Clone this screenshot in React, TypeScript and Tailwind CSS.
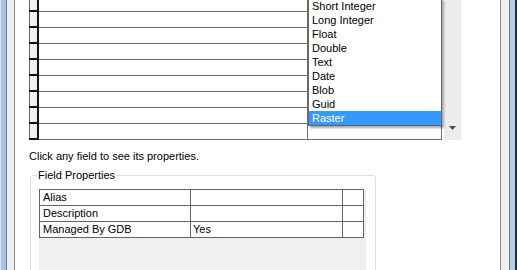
import React from "react";

const font = { fontFamily: '"Liberation Sans", Arial, sans-serif' };

const types = [
  "Short Integer",
  "Long Integer",
  "Float",
  "Double",
  "Text",
  "Date",
  "Blob",
  "Guid",
  "Raster",
];

function GridRow() {
  return (
    <div className="flex h-[16px] shrink-0">
      <div className="flex h-[16px] w-[10px] shrink-0 flex-col">
        <div className="flex h-[14px] shrink-0">
          <div className="w-[1px] bg-[#6a6a6a]" />
          <div className="w-[7px] bg-[#f0f0f0]" />
          <div className="w-[2px] bg-[#111]" />
        </div>
        <div className="h-[2px] shrink-0 bg-[#111]" />
      </div>
      <div className="h-[16px] w-[269px] shrink-0 border-b border-r border-[#6d6d6d]" />
      <div className="h-[16px] w-[134px] shrink-0 border-b border-r border-[#6d6d6d]" />
    </div>
  );
}

export default function App() {
  return (
    <div
      className="flex h-[270px] w-[517px] overflow-hidden bg-white text-[11px] leading-[13px] text-black"
      style={font}
    >
      {/* left window frame */}
      <div className="flex h-full shrink-0">
        <div className="w-[1px] bg-[#dfe8f3]" />
        <div className="w-[5px] bg-[#a9c4e6]" />
        <div className="w-[1px] bg-[#6e7887]" />
        <div className="w-[7px] bg-[#f0f0f0]" />
        <div className="w-[1px] bg-[#8a8a8a]" />
      </div>

      {/* main content */}
      <div className="flex w-[485px] shrink-0 flex-col pl-[14px]">
        {/* grid */}
        <div className="relative flex h-[140px] shrink-0 overflow-hidden">
          <div className="-mt-[4px] flex shrink-0 flex-col">
            {Array.from({ length: 9 }).map((_, i) => (
              <GridRow key={i} />
            ))}
          </div>
          <div className="ml-[2px] flex h-[140px] w-[17px] shrink-0 flex-col justify-end bg-[#ececec]">
            <div className="flex h-[14px] items-start justify-center pb-[4px]">
              <svg width="7" height="4" viewBox="0 0 7 4">
                <polygon points="0,0 7,0 3.5,4" fill="#4a4a4a" />
              </svg>
            </div>
          </div>

          {/* open dropdown list */}
          <div className="absolute left-[279px] top-[-2px] w-[134px] border border-[#646464] bg-white shadow-[2px_2px_2px_rgba(0,0,0,0.35)]">
            {types.map((t) => (
              <div
                key={t}
                className={
                  t === "Raster"
                    ? "h-[14px] bg-[#3399ff] pl-[3px] leading-[14px] text-white"
                    : "h-[14px] pl-[3px] leading-[14px]"
                }
              >
                {t}
              </div>
            ))}
          </div>
        </div>

        <div className="mt-[10px] h-[13px] shrink-0">Click any field to see its properties.</div>

        {/* group box */}
        <div className="relative ml-[1px] mt-[12px] flex h-[200px] w-[346px] shrink-0 flex-col rounded-[3px] border border-[#d5dfe5] px-[8px] pt-[13px]">
          <div className="absolute left-[6px] top-[-7px] bg-white px-[1px]">Field Properties</div>
          <div className="flex h-full w-[327px] flex-col bg-[#f0f0f0]">
            <div className="w-[325px] border-t border-[#646464] bg-white">
              {[
                ["Alias", ""],
                ["Description", ""],
                ["Managed By GDB", "Yes"],
              ].map(([a, b]) => (
                <div key={a} className="flex h-[16px]">
                  <div className="h-[16px] w-[152px] border-b border-l border-r border-[#646464] pl-[3px] leading-[15px]">
                    {a}
                  </div>
                  <div className="h-[16px] w-[152px] border-b border-r border-[#646464] pl-[2px] leading-[15px]">
                    {b}
                  </div>
                  <div className="h-[16px] w-[21px] border-b border-r border-[#646464]" />
                </div>
              ))}
            </div>
          </div>
        </div>
      </div>

      {/* right window frame */}
      <div className="flex h-full shrink-0">
        <div className="w-[1px] bg-[#8a8a8a]" />
        <div className="w-[8px] bg-[#f0f0f0]" />
        <div className="w-[1px] bg-[#6e7887]" />
        <div className="w-[5px] bg-[#b4cde9]" />
        <div className="w-[2px] bg-[#2b2b2b]" />
      </div>
    </div>
  );
}
